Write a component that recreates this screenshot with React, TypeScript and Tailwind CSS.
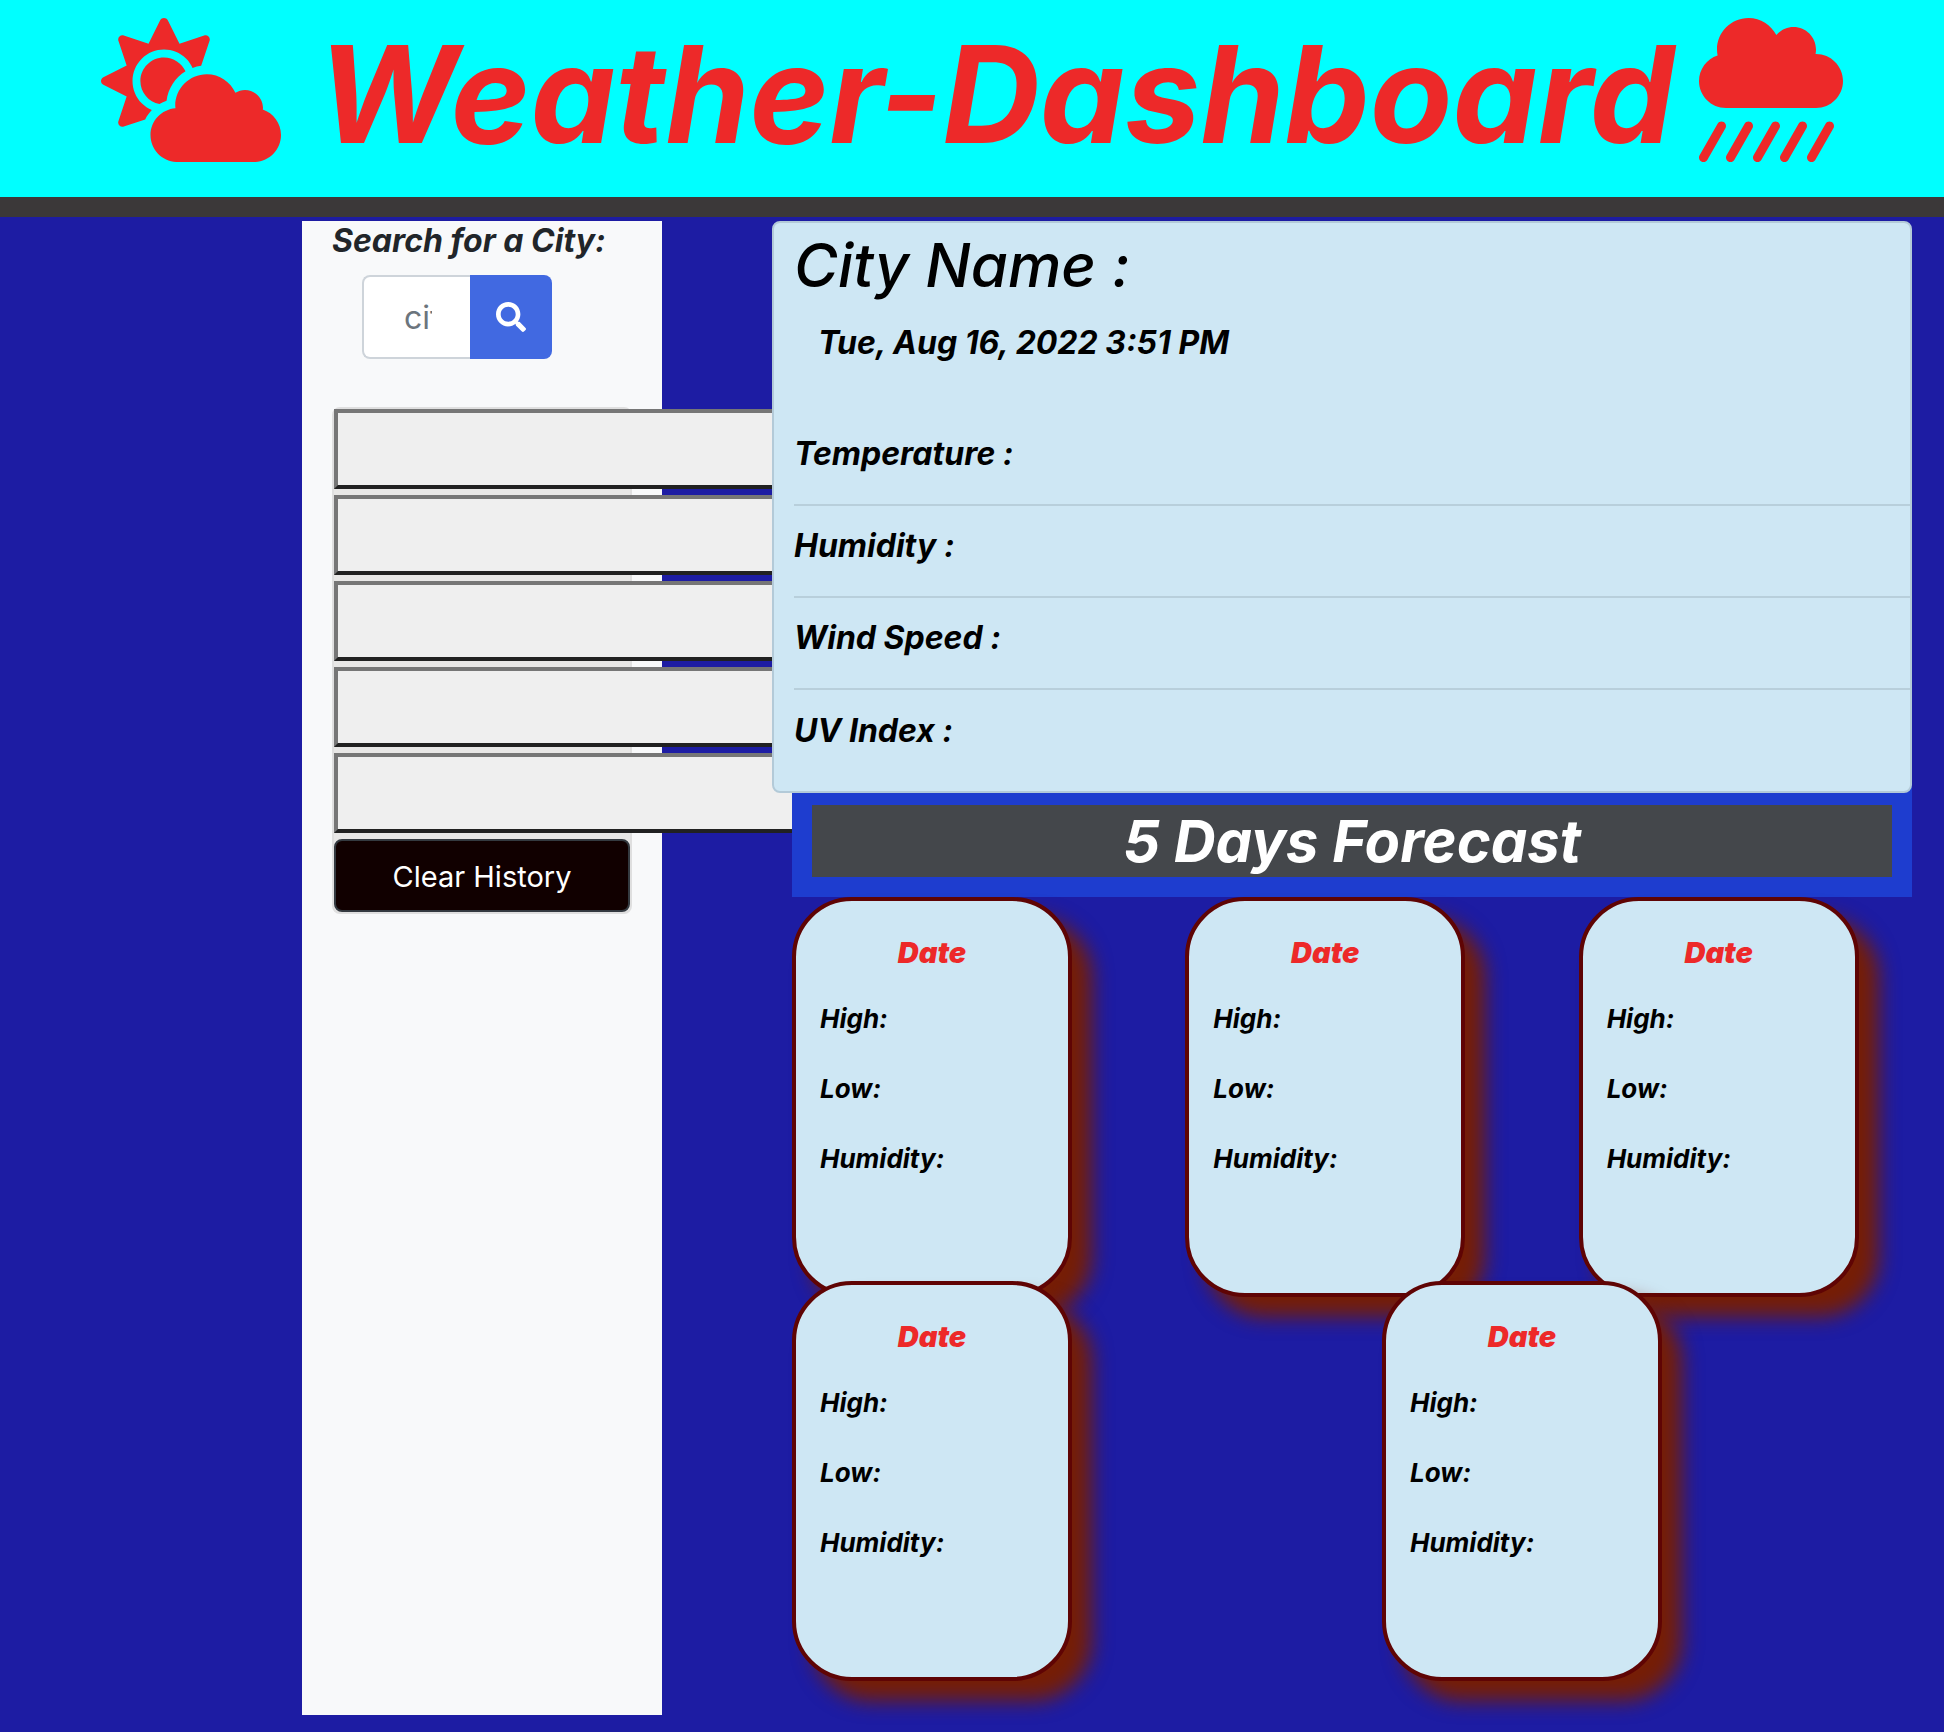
import React from "react";
import { FaCloudShowersHeavy, FaCloudSun, FaSearch } from "react-icons/fa";

const HISTORY_SLOTS = [1, 2, 3, 4, 5];
const READINGS = ["Temperature :", "Humidity :", "Wind Speed :", "UV Index :"];
const FIRST_DAYS = [1, 2, 3];
const LAST_DAYS = [4, 5];

function Header() {
  return (
    <header className="flex h-[217px] items-start justify-center border-b-[20px] border-[#3b3839] bg-[#00ffff] pt-[18px] text-[#ed2929]">
      <FaCloudSun className="h-36 w-[180px] shrink-0" aria-hidden="true" />
      <h1 className="mr-6 ml-9 text-[135px] leading-[152px] font-bold whitespace-nowrap italic">Weather-Dashboard</h1>
      <FaCloudShowersHeavy className="size-36 shrink-0" aria-hidden="true" />
    </header>
  );
}

function Sidebar() {
  return (
    <aside className="w-[360px] shrink-0 bg-[#f8f9fa] px-[30px]">
      <form onSubmit={(event) => event.preventDefault()}>
        <label htmlFor="city" className="block text-[32px] leading-[40px] font-bold whitespace-nowrap text-[#212529] italic">
          Search for a City:
        </label>
        <div className="mt-[14px] ml-[30px] flex h-[84px]">
          <input
            id="city"
            type="text"
            placeholder="city"
            className="w-[108px] rounded-l-lg border-2 border-r-0 border-[#ced4da] bg-white pt-0.5 pr-[38px] pl-10 text-[32px] text-[#495057] placeholder:text-[#6c757d]"
          />
          <button type="submit" aria-label="Search" className="flex w-[82px] items-center justify-center rounded-r-lg bg-[#4169e1] text-white">
            <FaSearch className="size-[30px]" />
          </button>
        </div>
      </form>
      <div className="mt-12 flex flex-col gap-[6px] rounded-lg border-2 border-[#dfdfdf] bg-[#e8e7e6]">
        {HISTORY_SLOTS.map((slot) => (
          <button
            key={slot}
            type="button"
            aria-label={`Saved city ${slot}`}
            className="h-20 w-[500px] border-4 border-t-[#767676] border-r-[#212121] border-b-[#212121] border-l-[#767676] bg-[#efefef]"
          />
        ))}
        <button type="button" className="h-[73px] rounded-lg border-2 border-[#343a40] bg-[#110000] pt-0.5 text-[29px] leading-[45px] text-white">
          Clear History
        </button>
      </div>
    </aside>
  );
}

function CurrentWeather() {
  return (
    <section className="relative z-10 -ml-5 rounded-lg border-2 border-[#b3cad8] bg-[#cee7f4] pb-[9px] pl-5 text-black italic">
      <h2 className="pt-[2px] text-[60px] leading-[80px] font-medium">City Name :</h2>
      <p className="mt-[14px] pl-6 text-[32px] leading-[48px] font-bold">Tue, Aug 16, 2022 3:51 PM</p>
      <ul className="mt-[47px] divide-y-2 divide-[#b8cfdb] text-[32px] font-bold">
        {READINGS.map((reading) => (
          <li key={reading} className="flex h-[92px] items-center pb-[10px]">
            {reading}
          </li>
        ))}
      </ul>
    </section>
  );
}

function DayCard() {
  return (
    <article className="h-[400px] w-[280px] rounded-[60px] border-4 border-[#5f0404] bg-[#cee7f4] px-6 pt-[34px] text-black italic shadow-[20px_20px_20px_#761e06]">
      <h3 className="text-center text-[29px] leading-9 font-black text-[#ed2929]">Date</h3>
      <p className="mt-7 text-[26px] leading-10 font-bold">High:</p>
      <p className="mt-[30px] text-[26px] leading-10 font-bold">Low:</p>
      <p className="mt-[30px] text-[26px] leading-10 font-bold">Humidity:</p>
    </article>
  );
}

function Forecast() {
  return (
    <section>
      <h2 className="-mt-2 border-20 border-[#1e3dcf] bg-[#44474b] text-center text-[58px] leading-[72px] font-bold text-white italic">
        5 Days Forecast
      </h2>
      <div className="-mr-[60px] grid auto-rows-[384px] grid-cols-6">
        {FIRST_DAYS.map((day) => (
          <div key={day} className="col-span-2">
            <DayCard />
          </div>
        ))}
        {LAST_DAYS.map((day) => (
          <div key={day} className="col-span-3">
            <DayCard />
          </div>
        ))}
      </div>
    </section>
  );
}

export default function App() {
  return (
    <div className="min-h-screen overflow-x-hidden bg-[#1d1ca3] pb-[17px] font-['Inter',sans-serif]">
      <Header />
      <div className="mt-1 flex pr-8 pl-[302px]">
        <Sidebar />
        <main className="relative ml-[130px] min-w-0 flex-1 pb-[50px]">
          <CurrentWeather />
          <Forecast />
        </main>
      </div>
    </div>
  );
}
